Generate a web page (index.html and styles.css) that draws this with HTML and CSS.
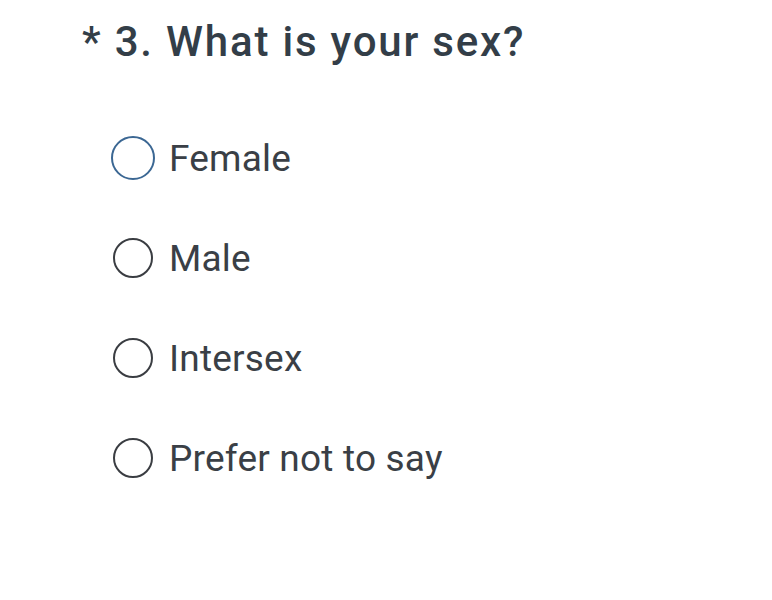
FILE: index.html
```html
<!DOCTYPE html>
<html>
<head>
<meta charset="utf-8">
<link rel="stylesheet" href="styles.css">
</head>
<body>
<div class="question">
  <h1 class="title"><span class="req">*</span> 3. What is your sex?</h1>
  <div class="options">
    <label class="option focused"><span class="radio"></span><span class="label">Female</span></label>
    <label class="option"><span class="radio"></span><span class="label">Male</span></label>
    <label class="option"><span class="radio"></span><span class="label">Intersex</span></label>
    <label class="option"><span class="radio"></span><span class="label">Prefer not to say</span></label>
  </div>
</div>
</body>
</html>
```

FILE: styles.css
```css
html, body {
  margin: 0;
  padding: 0;
  background: #ffffff;
}
body {
  font-family: Roboto, "Liberation Sans", sans-serif;
  color: #333e48;
}
.question {
  padding: 18px 0 0 82px;
}
.title {
  margin: 0;
  font-size: 42px;
  font-weight: 500;
  letter-spacing: 1.8px;
  line-height: 48px;
  color: #333e48;
}
.options {
  display: flex;
  flex-direction: column;
  margin-top: 42px;
  padding-left: 31px;
}
.option {
  display: flex;
  align-items: center;
  height: 100px;
  gap: 16px;
}
.radio {
  width: 40px;
  height: 40px;
  box-sizing: border-box;
  border: 2px solid #3a3d42;
  border-radius: 50%;
  flex: none;
}
.focused .radio {
  width: 44px;
  height: 44px;
  margin-left: -2px;
  margin-right: -2px;
  border-color: #3b6793;
}
.label {
  font-size: 37px;
  letter-spacing: 0.2px;
  color: #3a3f46;
}
```
